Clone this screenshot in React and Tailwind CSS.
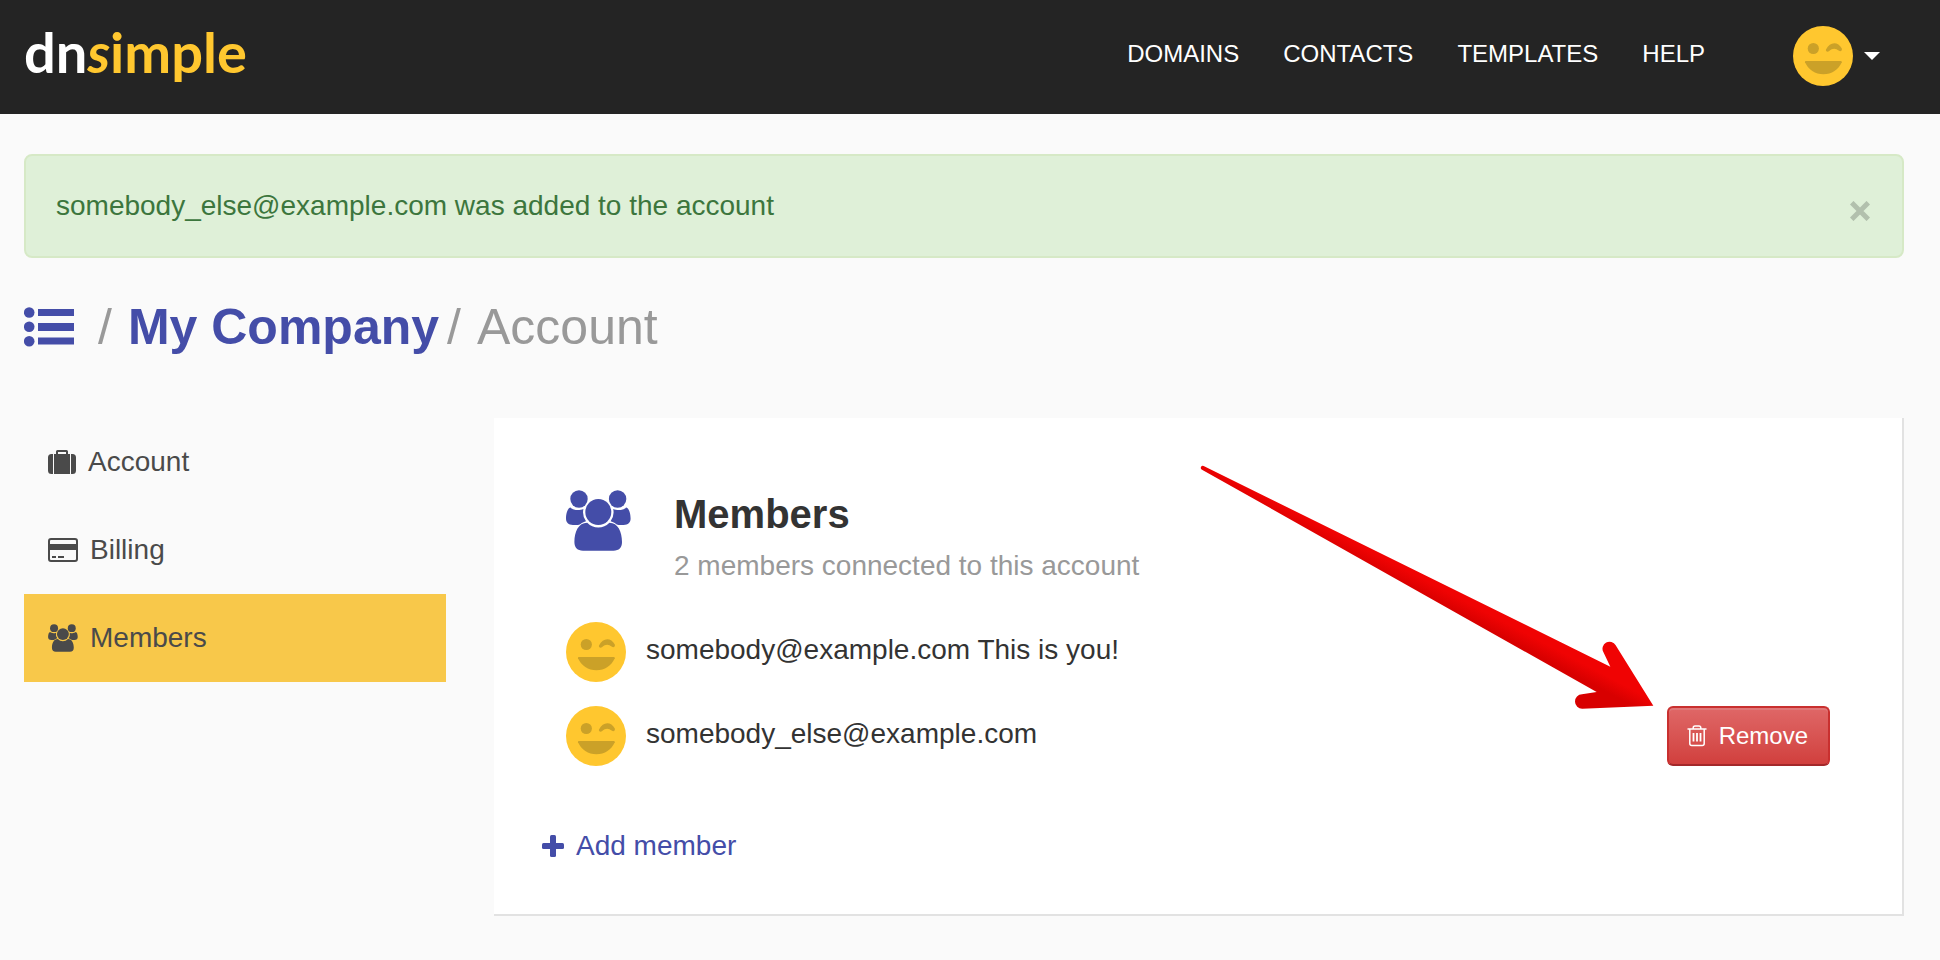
const NAV = ['DOMAINS', 'CONTACTS', 'TEMPLATES', 'HELP'];

function Smiley() {
  return (
    <svg className="size-[60px] shrink-0" viewBox="0 0 60 60" aria-hidden="true">
      <circle cx="30" cy="30" r="30" fill="#ffc72f" />
      <circle cx="20.3" cy="22.5" r="5.6" fill="#cba128" />
      <path d="M33 23.500C37 15.500 45 15.500 48.800 22.500C49.500 24.500 47.500 26 46 24.800C42.500 21.800 39.500 22 36.200 25C34.500 26.500 32.300 25.200 33 23.500Z" fill="#cba128" />
      <path d="M12.6 35H48a1 1 0 0 1 .8 1.2C45.6 43.4 38.6 48.3 30.4 48.3S15.2 43.4 12 36.2A1 1 0 0 1 12.6 35Z" fill="#cba128" />
    </svg>
  );
}

function Group({ className }) {
  return (
    <svg className={className} viewBox="0 0 65 61" aria-hidden="true" fill="currentColor">
      <circle cx="13" cy="9" r="8.7" />
      <circle cx="51.6" cy="9" r="8.7" />
      <path d="M4.5 17.6C7 20.5 13.500 20.800 17.400 19A15.200 15.200 0 0 0 20 31.200C16 32 14.500 34.600 12 35H7C2.500 34.800 0 32.5 0 28.5 0 23 1.8 18 4.5 17.6Z" />
      <path d="M60.100 17.6C57.600 20.5 51.100 20.800 47.200 19A15.200 15.200 0 0 1 44.600 31.200C48.600 32 50.100 34.600 52.600 35H57.600C62.100 34.800 64.600 32.5 64.600 28.5 64.600 23 62.800 18 60.100 17.6Z" />
      <path d="M21.200 32.800A15.200 15.200 0 0 0 43.400 32.800C52 32.800 56 42 56 52 56 57.5 53 60.7 47.5 60.7H17C11.5 60.7 8.4 57.5 8.4 52 8.4 42 12.4 32.800 21.200 32.800Z" />
      <circle cx="32.3" cy="22" r="13" />
    </svg>
  );
}

function Suitcase() {
  return (
    <svg className="h-6 w-7" viewBox="0 0 28 24" aria-hidden="true" fill="currentColor">
      <path d="M5 4v20H3.500A3.500 3.500 0 0 1 0 20.500v-13A3.500 3.500 0 0 1 3.500 4ZM23 4h1.500A3.500 3.500 0 0 1 28 7.500v13a3.500 3.500 0 0 1-3.500 3.500H23Z" />
      <path d="M6 4h2V1.500A1.500 1.500 0 0 1 9.500 0h9A1.500 1.500 0 0 1 20 1.500V4h2v20H6ZM10 2v2h8V2Z" fillRule="evenodd" />
    </svg>
  );
}

function Card() {
  return (
    <svg className="h-6 w-[30px]" viewBox="0 0 30 24" aria-hidden="true" fill="currentColor">
      <rect x="1" y="1" width="28" height="22" rx="2" fill="none" stroke="currentColor" strokeWidth="2" />
      <path d="M1 6h28v6H1zM4 18h4v2H4zM10 18h6v2h-6z" />
    </svg>
  );
}

function Arrow() {
  return (
    <svg className="pointer-events-none absolute top-[47px] right-[247px] h-[245px] w-[455px]" viewBox="60 195 1365 735" aria-hidden="true">
      <defs>
        <linearGradient id="shade" gradientUnits="userSpaceOnUse" x1="1144" y1="756" x2="1124" y2="794">
          <stop offset="0" stopColor="#f00303" />
          <stop offset="1" stopColor="#d80000" />
        </linearGradient>
      </defs>
      <path d="M71 198L1291 800L1270 756A21 21 0 0 1 1307 736L1420 917L1207 926A21 21 0 0 1 1206 883L1250 876L66 209A6 6 0 0 1 71 198Z" fill="url(#shade)" />
    </svg>
  );
}

function SideLink({ icon, label, active }) {
  return (
    <a
      href="#"
      aria-current={active ? 'page' : undefined}
      className={`flex h-[88px] items-center gap-3 px-6 text-[#4a4a4a] ${active ? 'bg-[#f8c84a]' : ''}`}
    >
      {icon}
      {label}
    </a>
  );
}

export default function App() {
  return (
    <div className="min-h-screen bg-[#fafafa] font-['Liberation_Sans',Arial,sans-serif] text-[28px] leading-9 text-[#333]">
      <header className="flex h-[114px] items-start justify-between bg-[#242424] pt-[26px] pr-[60px] pl-6 text-white">
        <a href="#" aria-label="dnsimple" className="font-[Lato,sans-serif] text-[56px] leading-[52px] font-bold">
          dn<span className="text-[#ffc72f]"><i>s</i>imple</span>
        </a>
        <div className="flex">
          <nav className="flex gap-11 text-2xl leading-[56px]">
            {NAV.map((item) => (
              <a key={item} href="#">{item}</a>
            ))}
          </nav>
          <button aria-label="User menu" className="ml-[88px] flex items-center gap-[11px]">
            <Smiley />
            <svg className="h-2 w-4" viewBox="0 0 16 8" aria-hidden="true">
              <path d="M0 0h16L8 8Z" fill="#fff" />
            </svg>
          </button>
        </div>
      </header>

      <main className="pt-10 pr-9 pb-11 pl-6">
        <div role="status" className="flex h-[104px] items-center justify-between rounded-lg border-2 border-[#d6e9c6] bg-[#dff0d8] pr-8 pl-[30px] text-[#3c763d]">
          <p>somebody_else@example.com was added to the account</p>
          <button aria-label="Close" className="mt-[10px]">
            <svg className="size-5" viewBox="0 0 20 20" aria-hidden="true">
              <path d="M1.700 1.700l16.600 16.600M18.300 1.700L1.700 18.300" stroke="#b2c0ad" strokeWidth="5" />
            </svg>
          </button>
        </div>

        <h1 className="mt-[39px] flex items-center text-[50px] leading-[60px] text-[#999]">
          <a href="#" aria-label="All accounts" className="mr-6 text-[#444da8]">
            <svg className="h-10 w-[50px]" viewBox="0 0 50 40" aria-hidden="true" fill="currentColor">
              <circle cx="5.200" cy="5.500" r="5.300" />
              <circle cx="5.200" cy="19.800" r="5.300" />
              <circle cx="5.200" cy="34.200" r="5.300" />
              <path d="M14 2h36v7H14zM14 16h36v8H14zM14 30.500h36v7H14z" />
            </svg>
          </a>
          <span>/</span>
          <a href="#" className="mr-2 ml-4 font-bold text-[#444da8]">My Company</a>
          <span>/</span>
          <span className="ml-4">Account</span>
        </h1>

        <div className="mt-[61px] flex items-start gap-12">
          <nav aria-label="Account" className="w-[422px] shrink-0">
            <SideLink icon={<Suitcase />} label="Account" />
            <SideLink icon={<Card />} label="Billing" />
            <SideLink icon={<Group className="h-7 w-[30px]" />} label="Members" active />
          </nav>

          <section className="relative min-w-0 grow border-r-2 border-b-2 border-[#e2e2e2] bg-white px-12 pt-[72px] pb-12">
            <div className="px-6">
              <div className="flex items-start gap-[43px]">
                <Group className="h-[61px] w-[65px] shrink-0 text-[#444da8]" />
                <div>
                  <h2 className="text-[40px] leading-[48px] font-bold">Members</h2>
                  <p className="mt-[10px] text-[#999]">2 members connected to this account</p>
                </div>
              </div>
              <ul className="mt-[38px] flex flex-col gap-6">
                <li className="flex h-[60px] gap-5 leading-[56px]">
                  <Smiley />
                  <span>somebody@example.com This is you!</span>
                </li>
                <li className="flex h-[60px] gap-5 leading-[56px]">
                  <Smiley />
                  <span>somebody_else@example.com</span>
                  <button className="ml-auto flex items-center gap-3 rounded-md border-2 border-[#c9302f] border-b-[#a3282a] bg-linear-to-b from-[#df6767] to-[#d13f3d] pr-5 pl-[18px] text-2xl text-white shadow-[inset_0_2px_0_#e07879]">
                    <svg className="h-[22px] w-5" viewBox="0 0 20 22" aria-hidden="true" fill="none" stroke="currentColor" strokeWidth="1.500">
                      <path d="M.5 4h19M6.200 4V3Q6.200 1 8 1h4q1.800 0 1.800 2v1M2.800 4v14.500q0 2 2 2h10.400q2 0 2-2V4" />
                      <path d="M6.500 8v8.500M10 8v8.500M13.500 8v8.500" strokeWidth="1.800" />
                    </svg>
                    Remove
                  </button>
                </li>
              </ul>
            </div>
            <a href="#" className="mt-[62px] inline-flex items-center gap-3 text-[#444da8]">
              <svg className="size-[22px]" viewBox="0 0 22 22" aria-hidden="true" fill="currentColor">
                <rect y="8" width="22" height="6" rx="1.500" />
                <rect x="8" width="6" height="22" rx="1.500" />
              </svg>
              Add member
            </a>
            <Arrow />
          </section>
        </div>
      </main>
    </div>
  );
}
